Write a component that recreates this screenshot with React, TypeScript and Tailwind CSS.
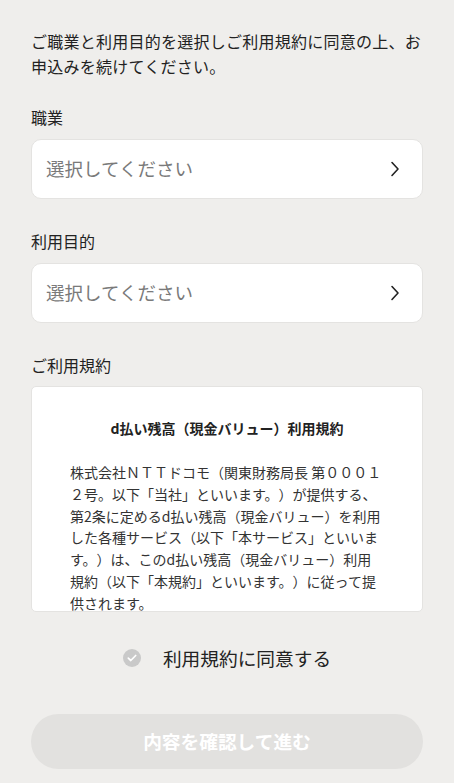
import React from 'react';

const font = { fontFamily: '"Noto Sans CJK JP", "Noto Sans", sans-serif' };

const Chevron = () => (
    <svg width="10" height="16" viewBox="0 0 10 16" fill="none">
        <path d="M2 1.5L8 8L2 14.5" stroke="#222" strokeWidth="1.6" strokeLinecap="round" strokeLinejoin="round" />
    </svg>
);

const SelectField = ({ label }: { label: string }) => (
    <div className="flex flex-col">
        <div className="text-[16px] leading-[24px] text-[#222]">{label}</div>
        <button className="mt-[10px] h-[60px] flex items-center justify-between rounded-[10px] bg-white border border-[#e4e3e1] pl-[14px] pr-[22px] text-left">
            <span className="text-[18.5px] text-[#7a7a7a]">選択してください</span>
            <Chevron />
        </button>
    </div>
);

export default function App() {
    return (
        <div className="min-h-[783px] w-[454px] bg-[#efeeec] px-[31px] pt-[29px] text-[#222] [text-spacing-trim:space-all]" style={font}>
            <p className="text-[16px] leading-[25px] tracking-[0.25px]">
                ご職業と利用目的を選択しご利用規約に同意の上、お申込みを続けてください。
            </p>

            <div className="mt-[26px] flex flex-col gap-[30px]">
                <SelectField label="職業" />
                <SelectField label="利用目的" />
            </div>

            <div className="mt-[30px] text-[16px] leading-[24px]">ご利用規約</div>
            <div className="mt-[9px] h-[226px] overflow-hidden rounded-[5px] bg-white border border-[#e4e3e1] px-[38px] pt-[30px]">
                <div className="text-center text-[14px] font-bold leading-[22px]">d払い残高（現金バリュー）利用規約</div>
                <p className="mt-[23px] text-[14px] leading-[21.8px] text-[#333]">
                    株式会社ＮＴＴドコモ（関東財務局長 第０００１２号。以下「当社」といいます。）が提供する、第2条に定めるd払い残高（現金バリュー）を利用した各種サービス（以下「本サービス」といいます。）は、このd払い残高（現金バリュー）利用規約（以下「本規約」といいます。）に従って提供されます。
                </p>
            </div>

            <label className="mt-[32px] flex items-center justify-center gap-[22px]">
                <span className="flex h-[18px] w-[18px] items-center justify-center rounded-full bg-[#c9c9c9]">
                    <svg width="10" height="8" viewBox="0 0 10 8" fill="none">
                        <path d="M1.3 4.2L3.8 6.5L8.7 1.5" stroke="#fff" strokeWidth="1.7" strokeLinecap="round" strokeLinejoin="round" />
                    </svg>
                </span>
                <span className="text-[18.7px] leading-[28px]">利用規約に同意する</span>
            </label>

            <button disabled className="mt-[42px] h-[55px] w-full rounded-full bg-[#e2e1df] text-[18.7px] font-bold text-white">
                内容を確認して進む
            </button>
        </div>
    );
}
